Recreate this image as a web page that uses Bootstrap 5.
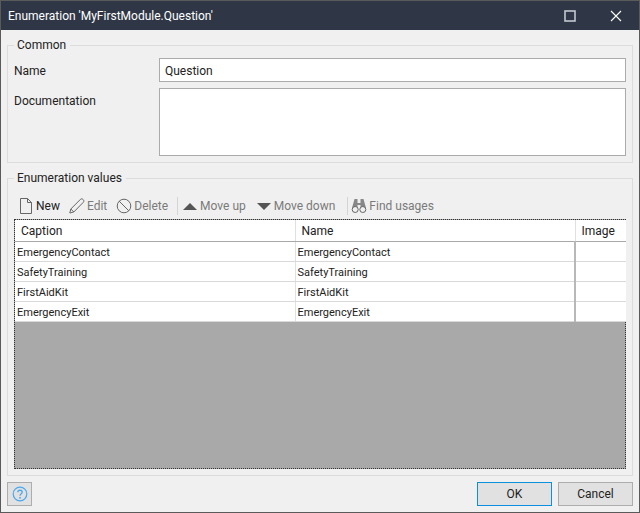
<!DOCTYPE html>
<html>
<head>
    <meta charset='utf-8'>
    <title>Enumeration</title>
    <link href="https://cdn.jsdelivr.net/npm/bootstrap@5.3.6/dist/css/bootstrap.min.css" rel="stylesheet">
    <style>
        html, body { height: 513px; overflow: hidden; }
        body { font-family: Roboto, "Open Sans", sans-serif; font-size: 12px; color: #222; background: #f0f0f0; }
        .win { width: 640px; height: 513px; background: #f0f0f0; border: 1px solid #5a5a5a; }
        .titlebar { height: 29px; background: #2f3747; color: #fff; padding-left: 7px; font-size: 12px; }
        .winbtn { width: 46px; height: 29px; }
        .main { padding: 7px 6px 0 6px; }
        .grp { border: 1px solid #dcdcdc; margin: 0; min-width: 0; }
        .grp legend { float: none; width: auto; font-size: 12px; line-height: 16px; margin: 0; padding: 0 4px 0 3px; color: #222; }
        .grp-common { height: 126px; padding: 0 6px; }
        .grp-values { height: 306px; margin-top: 7px; padding: 0 6px; }
        .frow { display: flex; }
        .flabel { width: 145px; }
        .finput { flex: 1; background: #fff; border: 1px solid #ababab; }
        .row-name { height: 24px; margin-top: 5px; }
        .row-name .flabel { line-height: 27px; }
        .row-name .finput { padding: 0 5px; line-height: 24px; }
        .row-doc { height: 68px; margin-top: 6px; }
        .row-doc .flabel { line-height: 27px; }
        .tools { height: 24px; margin-top: 8px; color: #7a7a7a; padding-left: 5px; }
        .tools .on { color: #222; }
        .tbtn { display: flex; align-items: center; gap: 2px; padding-right: 9px; white-space: nowrap; }
        .tbtn.wide { padding-right: 11px; }
        .tbtn.wider { padding-right: 12px; }
        .tsep { width: 1px; height: 18px; background: #d4d4d4; margin: 0 5px 0 0; }
        .tsep.tight { margin-right: 3px; }
        .gridbox { height: 250px; margin-top: 1px; border: 1px dotted #333; background: #a9a9a9; }
        .gridtab { width: 611px; table-layout: fixed; border-collapse: collapse; background: #fff; font-size: 11px; color: #222; margin: 0; }
        .gridtab th { font-weight: 400; font-size: 12px; height: 21px; padding: 1px 0 0 6px; border-bottom: 1px solid #a8a8a8; border-right: 1px solid #e0e0e0; }
        .gridtab td { height: 20px; line-height: 16px; padding: 3px 0 0 2px; border-bottom: 1px solid #d9d9d9; border-right: 1px solid #e0e0e0; }
        .gridtab td.imgcol { border-left: 2px solid #b8b8b8; }
        .gridtab th:last-child, .gridtab td:last-child { border-right: 0; }
        .foot { height: 36px; padding: 6px 6px 0 6px; }
        .helpbtn { width: 25px; height: 24px; background: #e1e1e1; border: 1px solid #adadad; padding: 0; }
        .dlgbtns { gap: 6px; }
        .dlgbtn { width: 75px; height: 24px; background: #e1e1e1; border: 1px solid #adadad; font-size: 12px; padding: 0; color: #222; line-height: 20px; border-radius: 0; }
        .dlgbtn.dflt { border-color: #0d8fe0; }
    </style>
</head>
<body>
    <div class="win d-flex flex-column">
        <div class="titlebar d-flex align-items-center justify-content-between">
            <span>Enumeration 'MyFirstModule.Question'</span>
            <div class="d-flex">
                <div class="winbtn d-flex align-items-center justify-content-center">
                    <svg width="12" height="12"><rect x="1" y="1" width="10" height="10" fill="none" stroke="#c4c8d0" stroke-width="1.6"/></svg>
                </div>
                <div class="winbtn d-flex align-items-center justify-content-center">
                    <svg width="12" height="12"><path d="M1 1L11 11M11 1L1 11" stroke="#fff" stroke-width="1.1"/></svg>
                </div>
            </div>
        </div>
        <div class="main">
            <fieldset class="grp grp-common">
                <legend>Common</legend>
                <div class="frow row-name">
                    <div class="flabel">Name</div>
                    <div class="finput">Question</div>
                </div>
                <div class="frow row-doc">
                    <div class="flabel">Documentation</div>
                    <div class="finput"></div>
                </div>
            </fieldset>
            <fieldset class="grp grp-values">
                <legend>Enumeration values</legend>
                <div class="tools d-flex align-items-center">
                    <div class="tbtn on">
                        <svg width="15" height="16" viewBox="0 0 15 16"><path d="M1.5 .5H8.5L12.5 4.5V15.5H1.5ZM8.5 .5V4.5H12.5" fill="none" stroke="#666"/></svg>New
                    </div>
                    <div class="tbtn">
                        <svg width="16" height="16" viewBox="0 0 16 16"><path d="M.8 15L1.8 11L11.6 1.2C12.4 .6 13.4 .8 14.2 1.6C15 2.4 15 3.4 14.4 4.2L4.8 14ZM1.8 11L4.8 14" fill="none" stroke="#666"/></svg>Edit
                    </div>
                    <div class="tbtn">
                        <svg width="16" height="16" viewBox="0 0 16 16"><circle cx="8" cy="8" r="6.8" fill="none" stroke="#666"/><path d="M3.2 3.2L12.8 12.8" stroke="#666"/></svg>Delete
                    </div>
                    <div class="tsep"></div>
                    <div class="tbtn wide">
                        <svg width="15" height="9" viewBox="0 0 15 9"><path d="M7 1L14 8H0Z" fill="#555"/></svg>Move up
                    </div>
                    <div class="tbtn wider">
                        <svg width="15" height="9" viewBox="0 0 15 9"><path d="M7 8L14 1H0Z" fill="#555"/></svg>Move down
                    </div>
                    <div class="tsep tight"></div>
                    <div class="tbtn">
                        <svg width="16" height="16" viewBox="0 0 16 16"><path d="M3.5 1H6.5V5H9.5V1H12.5L15 10H9.5V7H6.5V10H1Z" fill="#888"/><circle cx="4.2" cy="11.5" r="3" fill="#f0f0f0" stroke="#666"/><circle cx="11.8" cy="11.5" r="3" fill="#f0f0f0" stroke="#666"/></svg>Find usages
                    </div>
                </div>
                <div class="gridbox">
                    <table class="gridtab">
                        <colgroup><col style="width:280px"><col style="width:280px"><col style="width:51px"></colgroup>
                        <thead>
                            <tr><th>Caption</th><th>Name</th><th>Image</th></tr>
                        </thead>
                        <tbody>
                            <tr><td>EmergencyContact</td><td>EmergencyContact</td><td class="imgcol"></td></tr>
                            <tr><td>SafetyTraining</td><td>SafetyTraining</td><td class="imgcol"></td></tr>
                            <tr><td>FirstAidKit</td><td>FirstAidKit</td><td class="imgcol"></td></tr>
                            <tr><td>EmergencyExit</td><td>EmergencyExit</td><td class="imgcol"></td></tr>
                        </tbody>
                    </table>
                </div>
            </fieldset>
        </div>
        <div class="foot d-flex justify-content-between">
            <button type="button" class="helpbtn d-flex align-items-center justify-content-center">
                <svg width="16" height="16" viewBox="0 0 16 16"><circle cx="8" cy="8" r="6.8" fill="none" stroke="#4aa8ee" stroke-width="1.2"/><path d="M5.8 6.2C5.8 3.6 10.2 3.6 10.2 6.2C10.2 7.8 8 7.8 8 9.8" fill="none" stroke="#4aa8ee" stroke-width="1.3"/><rect x="7.2" y="11" width="1.6" height="1.6" fill="#4aa8ee"/></svg>
            </button>
            <div class="d-flex dlgbtns">
                <button type="button" class="btn dlgbtn dflt">OK</button>
                <button type="button" class="btn dlgbtn">Cancel</button>
            </div>
        </div>
    </div>
    <script src="https://cdn.jsdelivr.net/npm/bootstrap@5.3.6/dist/js/bootstrap.bundle.min.js"></script>
</body>
</html>
